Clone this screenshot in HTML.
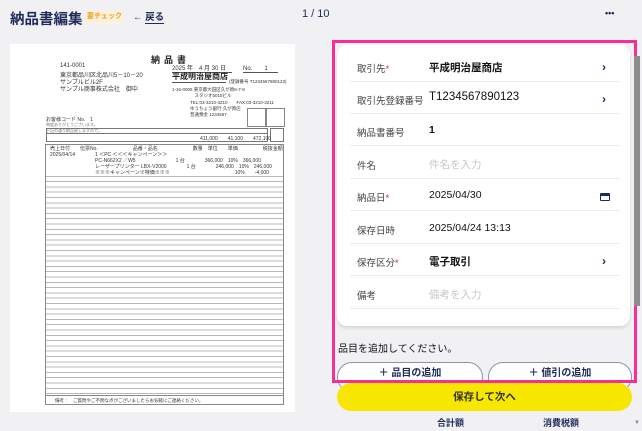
<!DOCTYPE html>
<html><head><meta charset="utf-8"><style>
*{margin:0;padding:0;box-sizing:border-box}
body{width:642px;height:431px;overflow:hidden;background:#f1f1f3;font-family:"Liberation Sans","Noto Sans CJK JP",sans-serif;position:relative;color:#222}
.a{position:absolute;white-space:nowrap}
.t{font-size:6px;color:#333;white-space:nowrap;transform-origin:0 0}
.row{position:absolute;left:350px;width:270px;height:32px;border-bottom:1.5px solid #ececee;font-size:10.5px}
.row .l{position:absolute;left:7px;top:11px;color:#444;font-size:9.5px}
.row .v{position:absolute;left:79px;top:10px;color:#111;font-weight:bold}
.row .c{position:absolute;right:14px;top:10px;color:#1e2a5a;font-weight:bold;font-size:12px}
.req{color:#e0203a}
.ph{color:#c8c8cc!important;font-weight:normal!important}
</style></head><body>
<!-- header -->
<div class="a" style="left:10px;top:8px;font-size:14.5px;font-weight:bold;color:#1e2a5a">納品書編集</div>
<div class="a" style="left:86px;top:10px;width:37px;height:14px;background:#fdf1dd;border-radius:3px;font-size:7px;color:#f0a020;text-align:center;line-height:14px;font-weight:bold">要チェック</div>
<div class="a" style="left:133px;top:9px;font-size:9.5px;color:#1e2a5a">← <span style="border-bottom:1px solid #1e2a5a;font-weight:bold">戻る</span></div>
<div class="a" style="left:302px;top:8px;font-size:11px;color:#1e2a5a">1 / 10</div>
<div class="a" style="left:605px;top:8px;font-size:9px;color:#1e2a5a;font-weight:bold;letter-spacing:0">•••</div>

<!-- paper -->
<div class="a" style="left:10px;top:44px;width:285px;height:368px;background:#fff"></div>
<div class="a" style="left:151px;top:53px;font-size:9px;font-weight:bold;letter-spacing:4px">納品書</div>
<div class="a t" style="left:60px;top:63px">141-0001</div>
<div class="a t" style="left:60px;top:70px">東京都品川区北品川5－10－20</div>
<div class="a t" style="left:60px;top:77px">サンプルビル2F</div>
<div class="a t" style="left:60px;top:84px">サンプル商事株式会社　御中</div>
<div class="a t" style="left:172px;top:63px;border-bottom:1px solid #555;width:60px">2025 年　4 月 30 日</div>
<div class="a t" style="left:243px;top:63px;border-bottom:1px solid #555;width:35px">No.　　1</div>
<div class="a" style="left:172px;top:71px;font-size:8px;font-weight:bold;border-bottom:1px solid #555;width:54px">平成明治屋商店</div>
<div class="a t" style="left:229px;top:79px;font-size:4.5px">(登録番号 T1234567890123)</div>
<div class="a t" style="left:172px;top:87px;font-size:4.5px">1-16-0005 東京都大田区久が原6-7-8<br>　　　　　スタジオ5015ビル</div>
<div class="a t" style="left:190px;top:100px;font-size:4.5px">TEL:03-3210-3210　　FAX:03-3210-3211<br>ゆうちょう銀行 久が原店<br>普通預金 1234567</div>
<div class="a" style="left:266px;top:108px;width:19px;height:19px;border:1px solid #888;background:#fff"></div>
<div class="a" style="left:247px;top:108px;width:19px;height:19px;border:1px solid #888;background:#fff"></div>
<div class="a t" style="left:46px;top:116px;font-size:5px">お客様コード No.　1</div>
<div class="a t" style="left:46px;top:122px;font-size:4px;color:#777">毎度ありがとうございます。<br>下記の通り納品致しますので。</div>
<div class="a" style="left:46px;top:128px;width:222px;height:14px;border:1px solid #777;background:linear-gradient(#777,#777) 0 4px/100% 1px no-repeat"></div>
<div class="a" style="left:270px;top:128px;width:14px;height:14px;border:1px solid #777"></div>
<div class="a t" style="left:200px;top:135px;font-size:5px">411,000　　41,100　　472,100</div>
<!-- lines table -->
<div class="a" style="left:45px;top:144px;width:239px;height:260px;border:1px solid #888;background:repeating-linear-gradient(#fff 0,#fff 4.3px,#b8b8b8 4.3px,#b8b8b8 5.3px)"></div>
<div class="a" style="left:46px;top:145px;width:237px;height:30px;background:#fff"></div>
<div class="a t" style="left:50px;top:145px;font-size:5px">売上日付　　伝票No.　　　　　　　品番・品名　　　　　　　数量　単位　　単価　　　　　税抜金額</div>
<div class="a t" style="left:50px;top:151px;font-size:5px">2025/04/14　　　　1 ＜PC ＜＜＜キャンペーン＞＞</div>
<div class="a t" style="left:95px;top:157px;font-size:5px">PC-N662X2 ／W5　　　　　　　　1 台　　　　366,000　10%　366,000</div>
<div class="a t" style="left:95px;top:163px;font-size:5px">レーザープリンター LBX-V2000　　　　1 台　　　　246,000　10%　246,000</div>
<div class="a t" style="left:95px;top:169px;font-size:5px">※※※キャンペーン※特価※※※　　　　　　　　　　　　　10%　　-4,000</div>
<div class="a" style="left:45px;top:395px;width:239px;height:10px;background:#fff;border:1px solid #888"></div>
<div class="a t" style="left:55px;top:398px;font-size:4.5px">備考：　ご質問やご不明な点がございましたらお気軽にご連絡ください。</div>

<!-- panel -->
<div class="a" style="left:337px;top:45px;width:293px;height:281px;background:#fff;border-radius:10px;box-shadow:0 2px 3px rgba(0,0,0,.12)"></div>
<div class="row" style="top:50px"><span class="l">取引先<span class="req">*</span></span><span class="v">平成明治屋商店</span><span class="c">›</span></div>
<div class="row" style="top:82px"><span class="l">取引先登録番号</span><span class="v" style="font-weight:normal;font-size:11.5px;top:9px">T1234567890123</span><span class="c">›</span></div>
<div class="row" style="top:114px"><span class="l">納品書番号</span><span class="v">1</span></div>
<div class="row" style="top:147px"><span class="l">件名</span><span class="v ph">件名を入力</span></div>
<div class="row" style="top:179px"><span class="l">納品日<span class="req">*</span></span><span class="v" style="font-weight:normal">2025/04/30</span>
<span style="position:absolute;right:10px;top:14px;width:10px;height:8px;border:1.5px solid #1e2a5a;border-top-width:3px;border-radius:1px"></span></div>
<div class="row" style="top:212px"><span class="l">保存日時</span><span class="v" style="font-weight:normal">2025/04/24 13:13</span></div>
<div class="row" style="top:244px"><span class="l">保存区分<span class="req">*</span></span><span class="v">電子取引</span><span class="c">›</span></div>
<div class="row" style="top:277px"><span class="l">備考</span><span class="v ph">備考を入力</span></div>
<div class="a" style="left:338px;top:340px;font-size:10px;color:#111">品目を追加してください。</div>
<div class="a" style="left:337px;top:362px;width:146px;height:30px;border:1.5px solid #8a90b0;border-radius:15px;font-size:10px;font-weight:bold;color:#1e2a5a;text-align:center;padding-top:1px;background:#fff">＋ 品目の追加</div>
<div class="a" style="left:488px;top:362px;width:144px;height:30px;border:1.5px solid #8a90b0;border-radius:15px;font-size:10px;font-weight:bold;color:#1e2a5a;text-align:center;padding-top:1px;background:#fff">＋ 値引の追加</div>
<div class="a" style="left:337px;top:383px;width:295px;height:28px;background:#f7e600;border-radius:14px;font-size:10.5px;font-weight:bold;color:#333;text-align:center;line-height:28px">保存して次へ</div>
<div class="a" style="left:332px;top:40px;width:305px;height:343px;border:3px solid #f72f95"></div>
<div class="a" style="left:437px;top:416px;font-size:9px;font-weight:bold;color:#1e2a5a">合計額</div>
<div class="a" style="left:543px;top:416px;font-size:9px;font-weight:bold;color:#1e2a5a">消費税額</div>
<!-- scrollbar -->
<div class="a" style="left:634px;top:56px;width:6px;height:250px;background:#8c8c8c"></div>
<div class="a" style="left:634px;top:420px;font-size:6px;color:#888">▼</div>
</body></html>
